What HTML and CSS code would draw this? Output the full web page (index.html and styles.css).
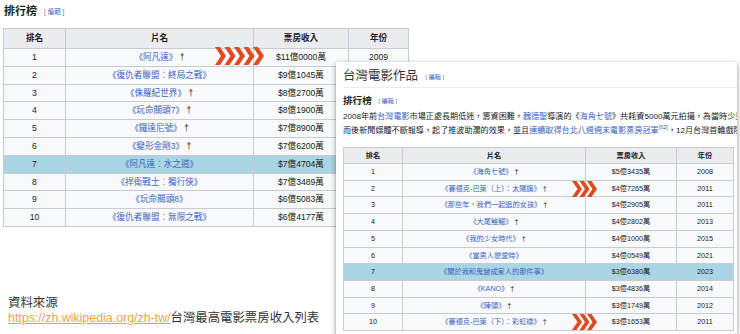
FILE: index.html
```html
<!DOCTYPE html>
<html lang="zh-Hant">
<head>
    <meta charset="UTF-8">
    <meta name="viewport" content="width=device-width, initial-scale=1.0">
    <title>台灣最高電影票房收入列表</title>
    <link rel="stylesheet" href="styles.css">
</head>
<body>
    <div class="page">
        <section class="ranking">
            <h3 class="sec-title">排行榜 <span class="edit">[ <a href="#">編輯</a> ]</span></h3>
            <table class="wiki-table big">
                <colgroup><col style="width:62px"><col style="width:188px"><col style="width:95px"><col style="width:60px"></colgroup>
                <tr><th>排名</th><th>片名</th><th>票房收入</th><th>年份</th></tr>
                <tr><td>1</td><td><a href="#">《阿凡達》</a> †</td><td>$11億0000萬</td><td>2009</td></tr>
                <tr><td>2</td><td><a href="#">《復仇者聯盟：終局之戰》</a></td><td>$9億1045萬</td><td>2019</td></tr>
                <tr><td>3</td><td><a href="#">《侏羅紀世界》</a> †</td><td>$8億2700萬</td><td>2015</td></tr>
                <tr><td>4</td><td><a href="#">《玩命關頭7》</a> †</td><td>$8億1900萬</td><td>2015</td></tr>
                <tr><td>5</td><td><a href="#">《鐵達尼號》</a> †</td><td>$7億8900萬</td><td>1997</td></tr>
                <tr><td>6</td><td><a href="#">《變形金剛3》</a> †</td><td>$7億6200萬</td><td>2011</td></tr>
                <tr class="hl"><td>7</td><td><a href="#">《阿凡達：水之道》</a></td><td>$7億4704萬</td><td>2022</td></tr>
                <tr><td>8</td><td><a href="#">《捍衛戰士：獨行俠》</a></td><td>$7億3489萬</td><td>2022</td></tr>
                <tr><td>9</td><td><a href="#">《玩命關頭8》</a></td><td>$6億5083萬</td><td>2017</td></tr>
                <tr><td>10</td><td><a href="#">《復仇者聯盟：無限之戰》</a></td><td>$6億4177萬</td><td>2018</td></tr>
            </table>
            <p class="source">資料來源<br><a class="src-link" href="#">https://zh.wikipedia.org/zh-tw/</a>台灣最高電影票房收入列表</p>
        </section>

        <!-- second screenshot laid over the first -->
        <div class="overlay-card">
            <h2 class="card-title">台灣電影作品 <span class="edit">[ <a href="#">編輯</a> ]</span></h2>
            <h3 class="card-sub">排行榜 <span class="edit">[ <a href="#">編輯</a> ]</span></h3>
            <p class="card-text">2008年前<a href="#">台灣電影</a>市場正處長期低迷，籌資困難，<a href="#">魏德聖</a>導演的《<a href="#">海角七號</a>》共耗資5000萬元拍攝，為當時少見的大製作，上映後口碑<br>而後新聞媒體不斷報導，起了推波助瀾的效果，並且<a href="#">連續取得台北八週週末電影票房冠軍</a><sup><a href="#">[62]</a></sup>，12月台灣首輪戲院</p>
            <table class="wiki-table small">
                <colgroup><col style="width:59px"><col style="width:183px"><col style="width:91px"><col style="width:57px"></colgroup>
                <tr><th>排名</th><th>片名</th><th>票房收入</th><th>年份</th></tr>
                <tr><td>1</td><td><a href="#">《海角七號》</a> †</td><td>$5億3435萬</td><td>2008</td></tr>
                <tr><td>2</td><td><a href="#">《賽德克-巴萊（上）：太陽旗》</a> †</td><td>$4億7265萬</td><td>2011</td></tr>
                <tr><td>3</td><td><a href="#">《那些年，我們一起追的女孩》</a> †</td><td>$4億2905萬</td><td>2011</td></tr>
                <tr><td>4</td><td><a href="#">《大尾鱸鰻》</a> †</td><td>$4億2802萬</td><td>2013</td></tr>
                <tr><td>5</td><td><a href="#">《我的少女時代》</a> †</td><td>$4億1000萬</td><td>2015</td></tr>
                <tr><td>6</td><td><a href="#">《當男人戀愛時》</a></td><td>$4億0549萬</td><td>2021</td></tr>
                <tr class="hl"><td>7</td><td><a href="#">《關於我和鬼變成家人的那件事》</a></td><td>$3億6380萬</td><td>2023</td></tr>
                <tr><td>8</td><td><a href="#">《KANO》</a> †</td><td>$3億4836萬</td><td>2014</td></tr>
                <tr><td>9</td><td><a href="#">《陣頭》</a> †</td><td>$3億1749萬</td><td>2012</td></tr>
                <tr><td>10</td><td><a href="#">《賽德克-巴萊（下）：彩虹橋》</a> †</td><td>$3億1653萬</td><td>2011</td></tr>
            </table>
        </div>

        <!-- chevron markers -->
        <svg class="chevrons ch-top" width="50" height="18" viewBox="0 0 50 18">
            <polygon points="0,0 5,0 11,9 5,18 0,18 6,9"/>
            <polygon points="9.5,0 14.5,0 20.5,9 14.5,18 9.5,18 15.5,9"/>
            <polygon points="19,0 24,0 30,9 24,18 19,18 25,9"/>
            <polygon points="28.5,0 33.5,0 39.5,9 33.5,18 28.5,18 34.5,9"/>
            <polygon points="38,0 43,0 49,9 43,18 38,18 44,9"/>
        </svg>
        <svg class="chevrons ch-mid" width="26" height="16" viewBox="0 0 26 16">
            <polygon points="0,0 4.5,0 10,8 4.5,16 0,16 5.5,8"/>
            <polygon points="7.5,0 12,0 17.5,8 12,16 7.5,16 13,8"/>
            <polygon points="15,0 19.5,0 25,8 19.5,16 15,16 20.5,8"/>
        </svg>
        <svg class="chevrons ch-low" width="26" height="16" viewBox="0 0 26 16">
            <polygon points="0,0 4.5,0 10,8 4.5,16 0,16 5.5,8"/>
            <polygon points="7.5,0 12,0 17.5,8 12,16 7.5,16 13,8"/>
            <polygon points="15,0 19.5,0 25,8 19.5,16 15,16 20.5,8"/>
        </svg>
    </div>
</body>
</html>
```

FILE: styles.css
```css
:root {
    --text: #202122;
    --link: #3b64c0;
    --border: #c8ccd1;
    --head-bg: #eaecf0;
    --row-bg: #f8f9fa;
    --hl-bg: #a9d5e4;
    --chevron: #e04a1e;
}

body {
    margin: 0;
    background: #ffffff;
    color: var(--text);
    font-family: 'Liberation Sans', 'Noto Sans CJK TC', sans-serif;
}

a {
    color: var(--link);
    text-decoration: none;
}

.page {
    position: relative;
    width: 740px;
    height: 334px;
    overflow: hidden;
}

.ranking {
    padding: 4px 0 0 3px;
}

.sec-title {
    margin: 0 0 0 1px;
    font-size: 11px;
    line-height: 14px;
    font-weight: bold;
}

.edit {
    margin-left: 4px;
    font-size: 6.5px;
    font-weight: normal;
    color: #72777d;
    vertical-align: 1px;
}

/* wiki style tables */
.wiki-table {
    border-collapse: collapse;
    table-layout: fixed;
    background: var(--row-bg);
    text-align: center;
}

.wiki-table th,
.wiki-table td {
    border: 1px solid var(--border);
    padding: 0;
    white-space: nowrap;
    overflow: hidden;
}

.wiki-table th {
    background: var(--head-bg);
    font-weight: bold;
}

.wiki-table tr.hl td {
    background: var(--hl-bg);
}

.big {
    margin-top: 9px;
    font-size: 8.6px;
}

.big th {
    line-height: 19px;
}

.big td {
    line-height: 16.8px;
}

.source {
    margin: 69px 0 0 5px;
    font-size: 12.4px;
    line-height: 15px;
    color: #333;
}

.src-link {
    color: #e8a73a;
    text-decoration: underline;
}

/* overlay screenshot */
.overlay-card {
    position: absolute;
    left: 336px;
    top: 62px;
    width: 394px;
    height: 270px;
    padding: 4px 0 0 7px;
    background: #ffffff;
    box-shadow: 0 2px 5px rgba(0, 0, 0, 0.45);
    overflow: hidden;
    white-space: nowrap;
}

.card-title {
    margin: 0;
    font-size: 12.5px;
    line-height: 20px;
    font-weight: normal;
    color: #333;
    border-bottom: 1px solid #ececec;
}

.card-sub {
    margin: 6px 0 0;
    font-size: 9.6px;
    line-height: 14px;
    font-weight: bold;
}

.card-sub .edit,
.card-title .edit {
    font-size: 6px;
}

.card-text {
    margin: 2px 0 0;
    font-size: 8.1px;
    line-height: 14px;
}

.card-text sup {
    font-size: 5.5px;
    line-height: 0;
}

.small {
    margin-top: 9px;
    font-size: 7.2px;
}

.small th {
    line-height: 15px;
}

.small td {
    line-height: 15.7px;
}

.chevrons {
    position: absolute;
    fill: var(--chevron);
}

.ch-top {
    left: 215px;
    top: 47px;
}

.ch-mid {
    left: 572px;
    top: 181px;
}

.ch-low {
    left: 572px;
    top: 314px;
}
```
